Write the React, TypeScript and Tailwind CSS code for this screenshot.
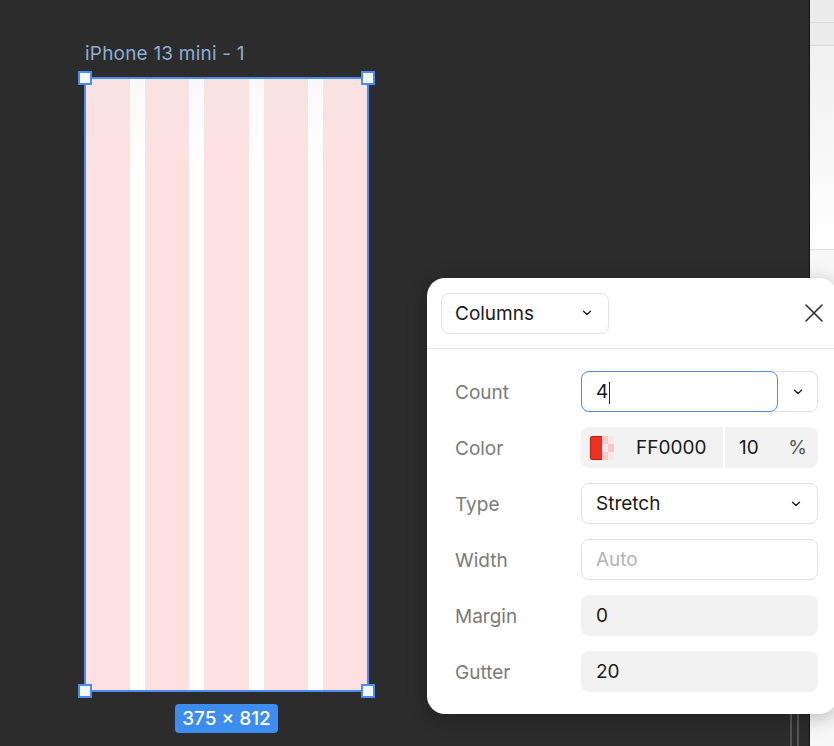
import React from "react";

const Chevron = () => (
  <svg width="10" height="6" viewBox="0 0 10 6" fill="none">
    <path d="M1.5 1.2 5 4.6 8.5 1.2" stroke="#222" strokeWidth="1.4" strokeLinecap="round" strokeLinejoin="round" />
  </svg>
);

const Handle = ({ pos }: { pos: string }) => (
  <div className={`absolute h-[14px] w-[14px] border-2 border-[#4a8cf0] bg-[#f4f8ff] ${pos}`} />
);

const Row = ({ label, children }: { label: string; children: React.ReactNode }) => (
  <div className="flex h-[41px] items-center">
    <div className="w-[154px] pl-[28px] pt-[3px] text-[19px] text-[#7b7b7b]">{label}</div>
    <div className="flex h-full flex-1">{children}</div>
  </div>
);

const Frame = () => (
  <div className="absolute left-[84px] top-[41px] flex flex-col items-center">
    <div className="mb-[12px] self-start pl-[1px] pt-[1px] text-[19px] leading-[23px] tracking-[0.2px] text-[#8daed4]">iPhone 13 mini - 1</div>
    <div className="relative h-[615px] w-[285px] border-2 border-[#4a8cf0]">
      <div className="flex h-full gap-[15px] bg-white">
        <div className="flex-1 bg-[#fde1e1]" />
        <div className="flex-1 bg-[#fde1e1]" />
        <div className="flex-1 bg-[#fde1e1]" />
        <div className="flex-1 bg-[#fde1e1]" />
        <div className="flex-1 bg-[#fde1e1]" />
      </div>
      <div className="absolute inset-x-0 top-0 h-[90px] bg-gradient-to-b from-[#e8e8e8]/25 to-transparent" />
      <Handle pos="-left-[8px] -top-[8px]" />
      <Handle pos="-right-[8px] -top-[8px]" />
      <Handle pos="-left-[8px] -bottom-[8px]" />
      <Handle pos="-right-[8px] -bottom-[8px]" />
    </div>
    <div className="mt-[12px] rounded-[4px] bg-[#3d8cf0] px-[7px] pt-[1px] text-[19px] font-medium leading-[28px] text-white">
      375 × 812
    </div>
  </div>
);

const Panel = () => (
  <div className="absolute left-[427px] top-[278px] h-[436px] w-[410px] rounded-[18px] bg-white shadow-[0_4px_20px_rgba(0,0,0,0.25)]">
    <div className="flex h-[71px] items-center justify-between border-b border-[#e6e6e6] pl-[14px] pr-[12px]">
      <div className="flex h-[41px] w-[168px] items-center justify-between rounded-[8px] border border-[#e3e3e3] pl-[13px] pr-[16px] text-[19px] text-[#1a1a1a]">
        <span className="pt-[2px]">Columns</span>
        <Chevron />
      </div>
      <svg width="20" height="20" viewBox="0 0 20 20" className="mr-[1px]">
        <path d="M2 2 18 18M18 2 2 18" stroke="#2a2a2a" strokeWidth="1.6" strokeLinecap="round" />
      </svg>
    </div>
    <div className="flex flex-col gap-[15px] pb-[22px] pr-[19px] pt-[22px]">
      <Row label="Count">
        <div className="relative z-10 flex flex-1 items-center rounded-[8px] border-[1.5px] border-[#4a8cf0] bg-white pl-[14px] pt-[2px] text-[19px] text-[#1a1a1a]">
          4<span className="ml-[1px] inline-block h-[22px] w-px bg-[#222]" />
        </div>
        <div className="-ml-[4px] flex w-[44px] items-center justify-center rounded-r-[8px] border border-l-0 border-[#e3e3e3] pl-[4px]">
          <Chevron />
        </div>
      </Row>
      <Row label="Color">
        <div className="flex flex-1 items-center rounded-[8px] bg-[#f2f2f2] text-[19px] text-[#1a1a1a]">
          <div className="ml-[9px] flex h-[24px] w-[24px] overflow-hidden rounded-[3px]">
            <div className="w-1/2 border border-r-0 border-[#c81a0e] bg-[#ee3020]" />
            <div className="grid w-1/2 grid-cols-2 grid-rows-3">
              <div className="bg-[#f3c9c9]" />
              <div className="bg-[#fbe6e6]" />
              <div className="bg-[#fbe6e6]" />
              <div className="bg-[#f3c9c9]" />
              <div className="bg-[#f3c9c9]" />
              <div className="bg-[#fbe6e6]" />
            </div>
          </div>
          <span className="ml-[22px] w-[87px] pt-[2px]">FF0000</span>
          <div className="h-full w-[2px] bg-white" />
          <span className="ml-[14px] flex-1 pt-[2px]">10</span>
          <span className="mr-[11px] pt-[2px] text-[#555]">%</span>
        </div>
      </Row>
      <Row label="Type">
        <div className="flex flex-1 items-center justify-between rounded-[8px] border border-[#e3e3e3] pl-[14px] pr-[16px] text-[19px] text-[#1a1a1a]">
          <span className="pt-[2px]">Stretch</span>
          <Chevron />
        </div>
      </Row>
      <Row label="Width">
        <div className="flex flex-1 items-center rounded-[8px] border border-[#e3e3e3] pl-[14px] pt-[2px] text-[19px] text-[#b3b3b3]">Auto</div>
      </Row>
      <Row label="Margin">
        <div className="flex flex-1 items-center rounded-[8px] bg-[#f2f2f2] pl-[15px] pt-[2px] text-[19px] text-[#1a1a1a]">0</div>
      </Row>
      <Row label="Gutter">
        <div className="flex flex-1 items-center rounded-[8px] bg-[#f2f2f2] pl-[15px] pt-[2px] text-[19px] text-[#1a1a1a]">20</div>
      </Row>
    </div>
  </div>
);

export default function App() {
  return (
    <div className="relative flex h-[746px] w-[834px] overflow-hidden bg-[#2c2c2c] font-['Inter',sans-serif]">
      <div className="relative flex-1">
        <div className="absolute bottom-0 right-[10px] flex h-[40px] gap-[5px]">
          <div className="w-[2px] bg-[#555]" />
          <div className="w-[2px] bg-[#555]" />
        </div>
      </div>
      <div className="flex w-[25px] flex-col border-l border-[#111] bg-white">
        <div className="h-[23px] border-b border-[#d8d8d8] bg-[#ececec]" />
        <div className="h-[23px] border-b border-[#d8d8d8] bg-[#ececec]" />
        <div className="h-[204px] border-b border-[#e0e0e0] bg-gradient-to-b from-[#f0f0f0] to-white" />
        <div className="flex-1 bg-[#f7f7f7]" />
      </div>
      <Frame />
      <Panel />
    </div>
  );
}
